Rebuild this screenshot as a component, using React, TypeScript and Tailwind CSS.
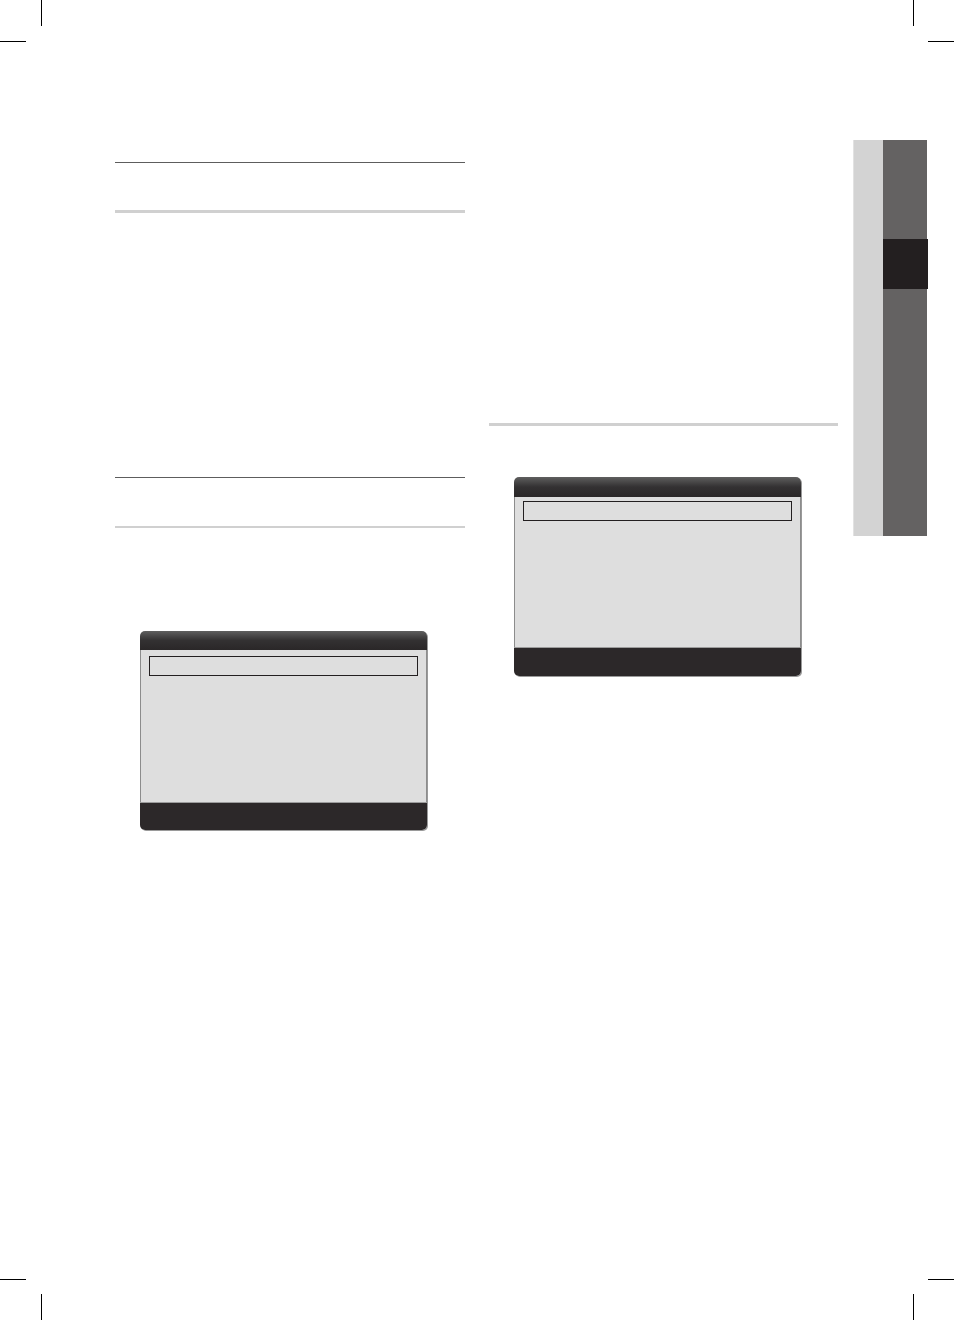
function CropMarks() {
  return (
    <>
      <div className="absolute left-[41px] top-0 h-[26px] w-px bg-black" />
      <div className="absolute left-0 top-[41px] h-px w-[26px] bg-black" />
      <div className="absolute left-[913px] top-0 h-[26px] w-px bg-black" />
      <div className="absolute left-[928px] top-[41px] h-px w-[26px] bg-black" />
      <div className="absolute left-0 top-[1279px] h-px w-[26px] bg-black" />
      <div className="absolute left-[41px] top-[1294px] h-[26px] w-px bg-black" />
      <div className="absolute left-[928px] top-[1279px] h-px w-[26px] bg-black" />
      <div className="absolute left-[913px] top-[1294px] h-[26px] w-px bg-black" />
    </>
  );
}

function MenuBox({ header, body, footer }: { header: string; body: string; footer: string }) {
  return (
    <div className="flex w-[287px] flex-col overflow-hidden rounded-[5px] shadow-[1px_1px_0_#9a9a9a]">
      <div className={`${header} bg-gradient-to-b from-[#5f5f5f] via-[#333132] to-[#2a2728]`} />
      <div className={`${body} border-x border-[#8c8c8c] bg-[#dedede] px-2`}>
        <div className="h-5 border border-[#231f20]" />
      </div>
      <div className={`${footer} border-t border-[#9c9c9c] bg-[#2c2829]`} />
    </div>
  );
}

export default function App() {
  return (
    <div className="relative h-[1320px] w-[954px] overflow-hidden bg-white font-['Liberation_Sans',sans-serif]">
      <CropMarks />

      <div className="flex pt-[140px]">
        {/* left column */}
        <div className="ml-[115px] mt-[22px] flex w-[350px] flex-col">
          <div className="h-px bg-[#5d5d5d]" />
          <div className="h-[47px]" />
          <div className="h-[3px] bg-[#d0d0d0]" />
          <div className="h-[264px]" />
          <div className="h-px bg-[#5d5d5d]" />
          <div className="h-[48px]" />
          <div className="h-[2px] bg-[#d0d0d0]" />
          <div className="h-[103px]" />
          <div className="pl-[25px]">
            <MenuBox header="h-[19px]" body="h-[152px] pt-1.5" footer="h-[28px]" />
          </div>
        </div>

        {/* right column */}
        <div className="ml-6 mt-[283px] flex w-[349px] flex-col">
          <div className="h-[3px] bg-[#d0d0d0]" />
          <div className="h-[51px]" />
          <div className="pl-[25px]">
            <MenuBox header="h-[20px]" body="h-[150px] pt-1" footer="h-[29px]" />
          </div>
        </div>

        {/* chapter tab */}
        <div className="ml-[15px] flex h-[396px]">
          <div className="w-[30px] border-l border-[#e2e2e2] bg-[#d3d3d3]" />
          <div className="flex w-[45px] flex-col">
            <div className="h-[99px] w-[44px] bg-[#646262]" />
            <div className="h-[50px] bg-[#231f20]" />
            <div className="w-[44px] flex-1 bg-[#646262]" />
          </div>
        </div>
      </div>
    </div>
  );
}
